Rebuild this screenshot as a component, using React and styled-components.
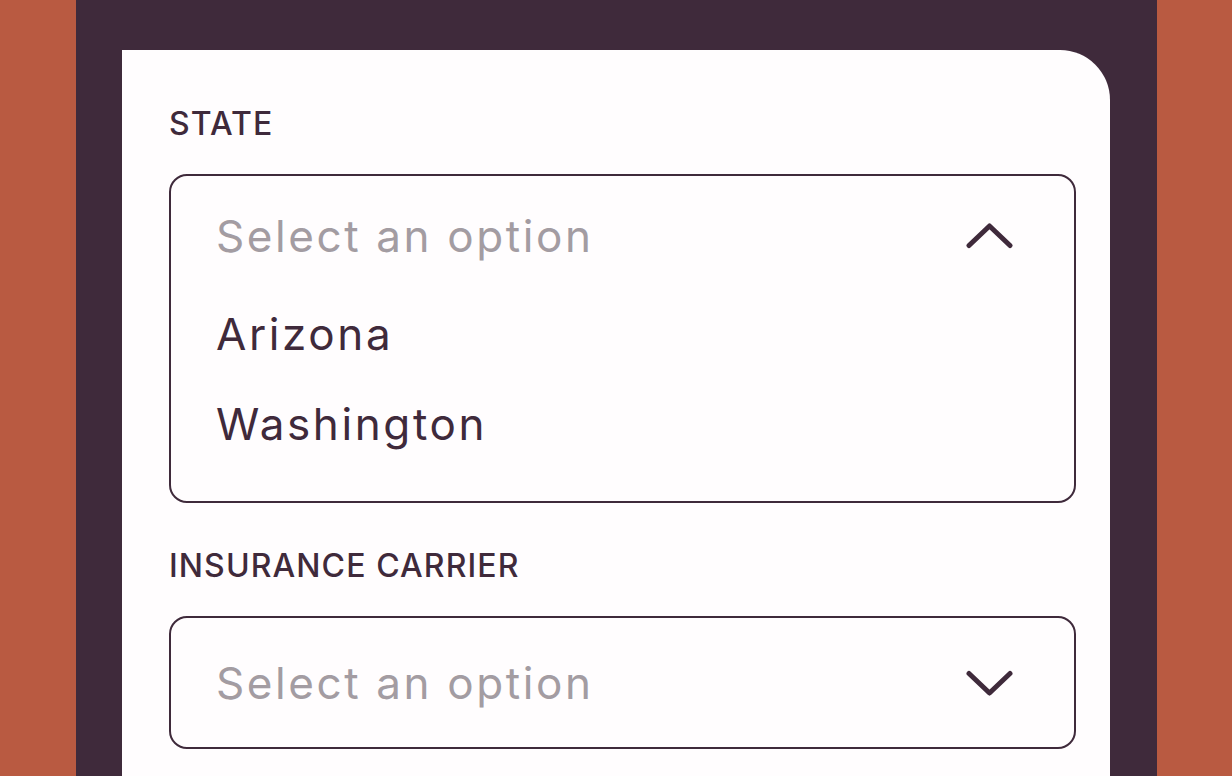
import styled, { createGlobalStyle } from "styled-components";

const GlobalStyle = createGlobalStyle`
  html, body {
    margin: 0;
    padding: 0;
    height: 100%;
    overflow: hidden;
  }
  body {
    font-family: Inter, "Noto Sans", sans-serif;
  }
`;

const plum = "#3f2a3b";

const ChevronIcon = ({ up }) => (
  <svg width="47" height="26" viewBox="0 0 47 26" fill="none">
    <path
      d={up ? "M3 22.5 L23.5 3 L44 22.5" : "M3 3.5 L23.5 23 L44 3.5"}
      stroke={plum}
      strokeWidth="5"
      strokeLinecap="round"
      strokeLinejoin="round"
    />
  </svg>
);

const Select = ({ open, options = [] }) => (
  <Box>
    <Header $open={open}>
      <Placeholder>Select an option</Placeholder>
      <ChevronIcon up={open} />
    </Header>
    {open && (
      <OptionList>
        {options.map((o) => (
          <Option key={o}>{o}</Option>
        ))}
      </OptionList>
    )}
  </Box>
);

const App = () => {
  return (
    <Page>
      <GlobalStyle />
      <Panel>
        <Card>
          <Field>
            <Label>STATE</Label>
            <Select open options={["Arizona", "Washington"]} />
          </Field>
          <Field>
            <Label>INSURANCE CARRIER</Label>
            <Select />
          </Field>
        </Card>
      </Panel>
    </Page>
  );
};

const Page = styled.div`
  height: 100vh;
  background: #b95a41;
  display: flex;
  justify-content: flex-start;
  padding-left: 76px;
  box-sizing: border-box;
`;

const Panel = styled.div`
  width: 1081px;
  height: 100%;
  background: ${plum};
  padding: 50px 47px 0 46px;
  box-sizing: border-box;
  display: flex;
`;

const Card = styled.div`
  flex: 1;
  background: #fffdfe;
  border-top-right-radius: 50px;
  padding: 58px 34px 0 47px;
  display: flex;
  flex-direction: column;
  gap: 47px;
`;

const Field = styled.div`
  display: flex;
  flex-direction: column;
  gap: 34px;
`;

const Label = styled.div`
  font-size: 32px;
  line-height: 1;
  font-weight: 500;
  color: ${plum};
  letter-spacing: 1.1px;
`;

const Box = styled.div`
  border: 2px solid ${plum};
  border-radius: 18px;
  display: flex;
  flex-direction: column;
`;

const Header = styled.div`
  height: ${(p) => (p.$open ? 119 : 129)}px;
  display: flex;
  align-items: center;
  justify-content: space-between;
  padding: 0 61px 0 45px;
`;

const Placeholder = styled.span`
  font-size: 44px;
  color: #a39ca2;
  line-height: 1;
  letter-spacing: 2.6px;
`;

const OptionList = styled.div`
  margin-top: -6px;
  padding: 0 45px 32px;
  display: flex;
  flex-direction: column;
`;

const Option = styled.div`
  height: 90px;
  display: flex;
  align-items: center;
  font-size: 44px;
  color: ${plum};
  letter-spacing: 2.6px;
`;

export default App;
